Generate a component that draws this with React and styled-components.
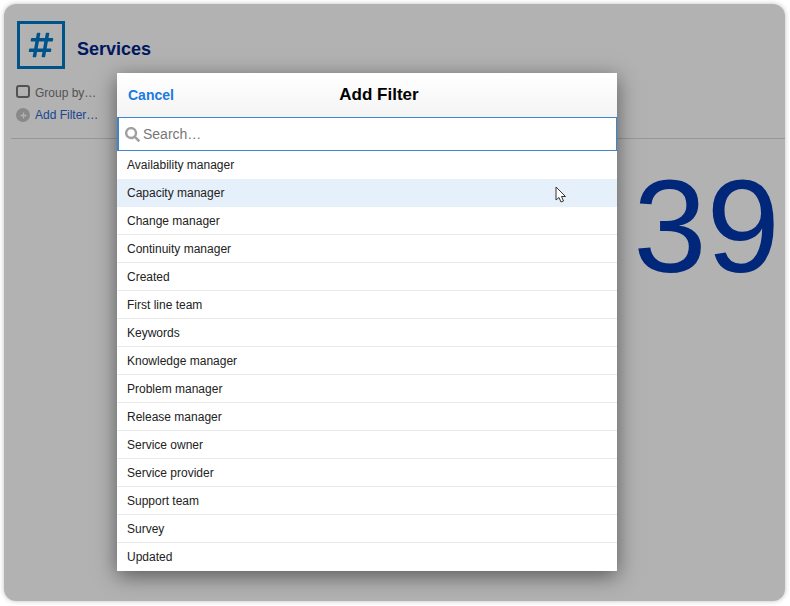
import React from "react";
import styled, { createGlobalStyle } from "styled-components";
import { FaSearch, FaPlus, FaHashtag } from "react-icons/fa";

const filters = [
  "Availability manager",
  "Capacity manager",
  "Change manager",
  "Continuity manager",
  "Created",
  "First line team",
  "Keywords",
  "Knowledge manager",
  "Problem manager",
  "Release manager",
  "Service owner",
  "Service provider",
  "Support team",
  "Survey",
  "Updated",
];

const Global = createGlobalStyle`
  html, body {
    margin: 0;
    padding: 0;
    background: #fff;
    font-family: "Liberation Sans", Arial, sans-serif;
  }
`;

const Stage = styled.div`
  width: 790px;
  height: 606px;
  padding: 4px 5px 5px 4px;
  box-sizing: border-box;
  overflow: hidden;
`;

const Win = styled.div`
  position: relative;
  height: 100%;
  background: #fff;
  border-radius: 12px;
  box-shadow: 0 0 5px rgba(0, 0, 0, 0.25);
  overflow: hidden;
  padding: 17px 0 0 7px;
  box-sizing: border-box;
`;

const Title = styled.div`
  display: flex;
  align-items: center;
  gap: 12px;
  padding-left: 6px;
`;

const IconBox = styled.div`
  width: 48px;
  height: 48px;
  box-sizing: border-box;
  border: 3px solid #0078c4;
  color: #0078c4;
  display: flex;
  align-items: center;
  justify-content: center;
`;

const TitleText = styled.h1`
  margin: 0;
  padding-top: 8px;
  font-size: 18px;
  font-weight: bold;
  color: #00258a;
`;

const Options = styled.div`
  display: flex;
  flex-direction: column;
  gap: 6px;
  padding: 16px 0 15px 5px;
  border-bottom: 1px solid #d8d8d8;
`;

const Option = styled.div`
  display: flex;
  align-items: center;
  gap: 5px;
  height: 16px;
  font-size: 12px;
  color: ${(p) => (p.$link ? "#2a66d0" : "#777")};
`;

const Check = styled.span`
  width: 14px;
  height: 13px;
  box-sizing: border-box;
  border: 2px solid #767676;
  border-radius: 3px;
  margin-top: -3px;
`;

const AddIcon = styled.span`
  width: 14px;
  height: 14px;
  border-radius: 50%;
  background: #c4c4c4;
  color: #fff;
  display: flex;
  align-items: center;
  justify-content: center;
`;

const Count = styled.div`
  position: absolute;
  right: 5px;
  top: 157px;
  font-size: 132px;
  line-height: 132px;
  color: #0038ae;
`;

const Dim = styled.div`
  position: absolute;
  inset: 0;
  background: rgba(0, 0, 0, 0.3);
`;

const Modal = styled.div`
  position: absolute;
  left: 113px;
  top: 69px;
  width: 500px;
  height: 498px;
  background: #fff;
  display: flex;
  flex-direction: column;
  box-shadow: 0 5px 20px rgba(0, 0, 0, 0.5);
`;

const ModalHead = styled.div`
  position: relative;
  height: 44px;
  flex: none;
  display: flex;
  align-items: center;
  justify-content: center;
  padding-left: 24px;
  background: linear-gradient(#fff, #f4f4f4);
`;

const Cancel = styled.button`
  position: absolute;
  left: 11px;
  top: 14px;
  padding: 0;
  border: none;
  background: none;
  font-family: inherit;
  font-size: 14px;
  font-weight: bold;
  color: #1a7ae0;
`;

const ModalTitle = styled.div`
  font-size: 17px;
  font-weight: bold;
  color: #000;
`;

const SearchBar = styled.div`
  height: 34px;
  flex: none;
  box-sizing: border-box;
  border: 1px solid #3f86c8;
  border-left-width: 2px;
  display: flex;
  align-items: center;
  gap: 3px;
  padding-left: 6px;
  color: #a0a0a0;
  box-shadow: 0 2px 3px rgba(63, 134, 200, 0.15);
`;

const SearchText = styled.span`
  font-size: 14px;
  color: #777;
`;

const List = styled.div`
  display: flex;
  flex-direction: column;
`;

const Row = styled.div`
  height: 28px;
  box-sizing: border-box;
  padding: 0 10px;
  display: flex;
  align-items: center;
  font-size: 12px;
  color: #222;
  background: ${(p) => (p.$active ? "#e6f0fa" : "#fff")};
  border-bottom: 1px solid ${(p) => (p.$plain ? "transparent" : "#e9e9e9")};
`;

const Pointer = styled.svg`
  position: absolute;
  left: 438px;
  top: 113px;
`;

export default function App() {
  return (
    <Stage>
      <Global />
      <Win>
        <Title>
          <IconBox>
            <FaHashtag size={28} />
          </IconBox>
          <TitleText>Services</TitleText>
        </Title>
        <Options>
          <Option>
            <Check />
            Group by…
          </Option>
          <Option $link>
            <AddIcon>
              <FaPlus size={7} />
            </AddIcon>
            Add Filter…
          </Option>
        </Options>
        <Count>39</Count>
        <Dim />
        <Modal>
          <ModalHead>
            <Cancel>Cancel</Cancel>
            <ModalTitle>Add Filter</ModalTitle>
          </ModalHead>
          <SearchBar>
            <FaSearch size={15} />
            <SearchText>Search…</SearchText>
          </SearchBar>
          <List>
            {filters.map((f, i) => (
              <Row key={f} $active={i === 1} $plain={i === 0 || i === 1 || i === filters.length - 1}>
                {f}
              </Row>
            ))}
          </List>
          <Pointer width="13" height="18" viewBox="0 0 13 18">
            <path
              d="M1 1 L1 14 L4 11.5 L6 16 L8.5 15 L6.5 10.5 L10.5 10.5 Z"
              fill="#fff"
              stroke="#333"
              strokeWidth="1"
              strokeLinejoin="round"
            />
          </Pointer>
        </Modal>
      </Win>
    </Stage>
  );
}
